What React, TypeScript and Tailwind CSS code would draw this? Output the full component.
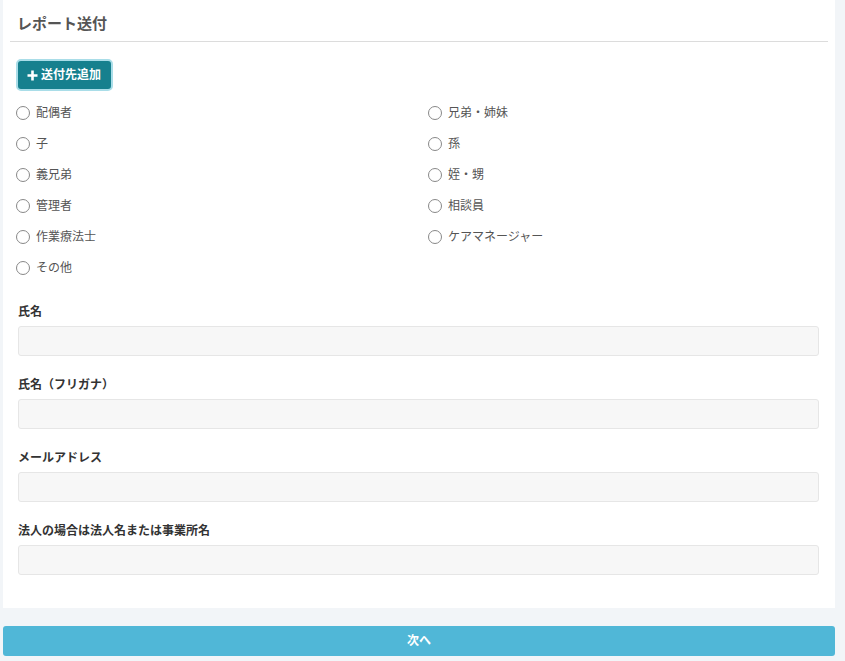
import React from 'react';

const leftOptions = ['配偶者', '子', '義兄弟', '管理者', '作業療法士', 'その他'];
const rightOptions = ['兄弟・姉妹', '孫', '姪・甥', '相談員', 'ケアマネージャー'];

const fields = ['氏名', '氏名（フリガナ）', 'メールアドレス', '法人の場合は法人名または事業所名'];

const Radio = ({ label }: { label: string }) => (
  <label className="flex items-center h-[31px] text-[12px] text-[#555]">
    <span className="w-[14px] h-[14px] -ml-[1px] rounded-full border-[1.5px] border-[#888] bg-white mr-[6px]" />
    {label}
  </label>
);

const App = () => {
  return (
    <div
      className="min-h-[661px] bg-[#f2f5f8] pl-[3px] pr-[10px]"
      style={{ fontFamily: '"Noto Sans", "Noto Sans CJK JP", sans-serif' }}
    >
      <div className="bg-white px-[7px] pb-[33px]">
        <div className="px-[7px] pt-[13px] pb-[8px] border-b border-[#dcdcdc]">
          <h2 className="text-[15px] leading-[20px] font-bold text-[#555]">レポート送付</h2>
        </div>

        <div className="pl-[7px] pr-[9px]">
          <div className="mt-[17px] -ml-[1px]">
            <button className="flex items-center gap-[3px] h-[32px] pl-[9px] pr-[10px] rounded-[5px] bg-[#16808e] text-white text-[12px] font-bold border-2 border-[#a9dde8]">
              <svg width="11" height="11" viewBox="0 0 11 11">
                <path d="M5.5 0.5v10M0.5 5.5h10" stroke="white" strokeWidth="2.6" />
              </svg>
              送付先追加
            </button>
          </div>

          <div className="grid grid-cols-[412px_1fr] mt-[6px]">
            <div>
              {leftOptions.map((o) => (
                <Radio key={o} label={o} />
              ))}
            </div>
            <div>
              {rightOptions.map((o) => (
                <Radio key={o} label={o} />
              ))}
            </div>
          </div>

          <div className="mt-[20px] pl-[1px] space-y-[20px]">
            {fields.map((f) => (
              <div key={f}>
                <div className="text-[12px] leading-[18px] font-bold text-[#333] mb-[5px]">{f}</div>
                <input
                  type="text"
                  className="block w-full h-[30px] rounded-[3px] bg-[#f7f7f7] border border-[#e6e6e6] outline-none"
                />
              </div>
            ))}
          </div>
        </div>
      </div>

      <button className="mt-[18px] w-full h-[30px] rounded-[3px] bg-[#50b7d7] text-white text-[12px] font-bold">
        次へ
      </button>
    </div>
  );
};

export default App;
